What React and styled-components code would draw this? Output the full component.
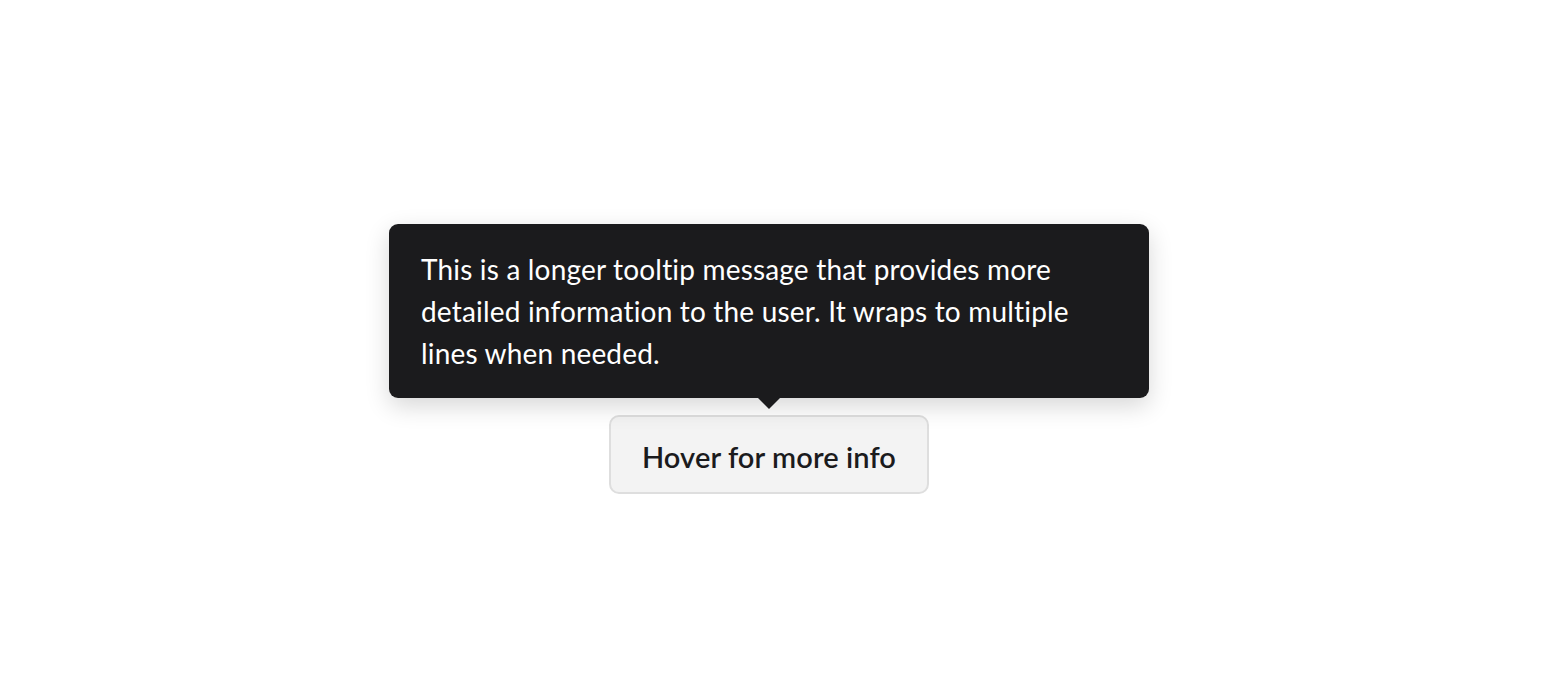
import React from "react";
import styled, { createGlobalStyle } from "styled-components";

const GlobalStyle = createGlobalStyle`
  html, body {
    margin: 0;
    padding: 0;
    background: #ffffff;
  }
  body {
    font-family: "Lato", "Open Sans", sans-serif;
  }
`;

function App() {
  return (
    <>
      <GlobalStyle />
      <Page>
        <Anchor>
          <Tooltip role="tooltip">
            This is a longer tooltip message that provides more detailed
            information to the user. It wraps to multiple lines when needed.
            <Arrow />
          </Tooltip>
          <Trigger type="button">Hover for more info</Trigger>
        </Anchor>
      </Page>
    </>
  );
}

const Page = styled.div`
  min-height: 100vh;
  box-sizing: border-box;
  display: flex;
  justify-content: center;
  align-items: flex-start;
  padding: 415px 12px 0 0;
`;

const Anchor = styled.div`
  position: relative;
  display: inline-flex;
`;

const Tooltip = styled.div`
  position: absolute;
  bottom: calc(100% + 17px);
  left: 50%;
  transform: translateX(-50%);
  width: 760px;
  box-sizing: border-box;
  padding: 24px 32px;
  background: #1b1b1d;
  color: #ffffff;
  border-radius: 9px;
  font-size: 28px;
  line-height: 42px;
  letter-spacing: 0.18px;
  box-shadow: 0 8px 24px rgba(0, 0, 0, 0.16);
`;

const Arrow = styled.span`
  position: absolute;
  top: 100%;
  left: 50%;
  transform: translateX(-50%);
  width: 0;
  height: 0;
  border-left: 11px solid transparent;
  border-right: 11px solid transparent;
  border-top: 11px solid #1b1b1d;
`;

const Trigger = styled.button`
  width: 320px;
  height: 79px;
  box-sizing: border-box;
  padding: 3px 0 0;
  background: #f3f3f3;
  border: 2px solid #dedede;
  border-radius: 10px;
  color: #1b1b1d;
  font-family: "Lato", "Open Sans", sans-serif;
  font-size: 29px;
  font-weight: 600;
  letter-spacing: 0.1px;
  cursor: pointer;
`;

export default App;
